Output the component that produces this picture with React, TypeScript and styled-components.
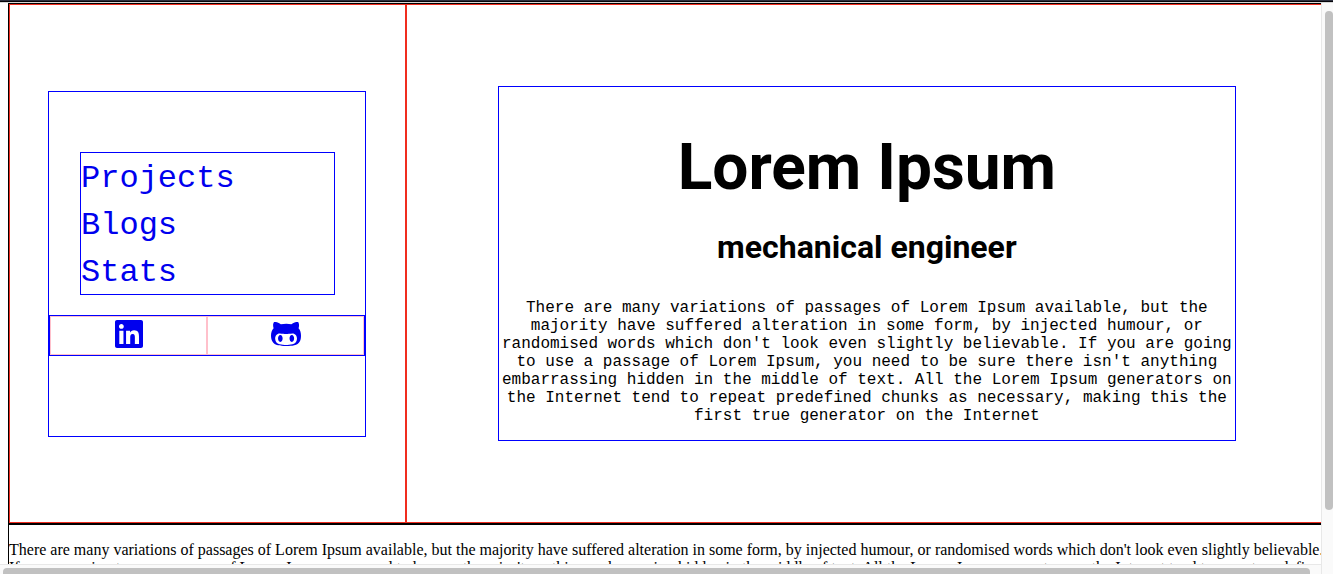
import React from 'react';
import styled, { createGlobalStyle } from 'styled-components';
import { FaLinkedin, FaGithubAlt } from 'react-icons/fa';

const GlobalStyle = createGlobalStyle`
  *, *::before, *::after { box-sizing: border-box; }
  body {
    margin: 0;
    background: #fff;
    color: #000;
    font: 16px/18px "Liberation Serif", "Times New Roman", serif;
    overflow: hidden;
  }
`;

const Frame = styled.div`
  display: grid;
  grid-template-columns: minmax(0, 1fr) 12px;
  grid-template-rows: 3px minmax(0, 1fr) 10px;
  height: 100vh;
`;

const WindowEdge = styled.div`
  grid-column: 1 / -1;
  background: #2d303f;
  border-bottom: 1px solid #d8d8d8;
  box-shadow: inset 0 -1px 0 #05050a;
`;

const Viewport = styled.div`
  overflow: hidden;
`;

const VerticalTrack = styled.div`
  grid-row: 2 / -1;
  grid-column: 2;
  padding: 8px 0 64px 3px;
  background: #fafafa;
  border-left: 1px solid #e8e8e8;
`;

const HorizontalTrack = styled.div`
  padding: 3px 11px 0 3px;
  background: #fafafa;
  border-top: 1px solid #e8e8e8;
`;

const Thumb = styled.div<{ $horizontal?: boolean }>`
  height: 100%;
  background: #c1c1c1;
  border-radius: ${(p) => (p.$horizontal ? '4px 4px 0 0' : '4px')};
`;

const Section = styled.section`
  width: 100%;
  margin-left: 8px;
  border: 1px solid #000;
`;

const Hero = styled(Section)`
  display: flex;
  min-height: 521px;
`;

const Column = styled.div<{ $width?: string }>`
  display: flex;
  align-items: center;
  justify-content: center;
  flex: ${(p) => (p.$width ? `0 0 ${p.$width}` : '1 1 0')};
  min-width: 0;
  border: 1px solid #f02d1f;
`;

const Panel = styled.div`
  box-sizing: content-box;
  width: 80%;
  border: 1px solid #00f;
`;

const Sidebar = styled(Panel)`
  display: flex;
  flex-direction: column;
  gap: 20px;
  min-height: 284px;
  padding-top: 60px;
`;

const Nav = styled.nav`
  box-sizing: content-box;
  display: flex;
  flex-direction: column;
  width: 80%;
  margin: 0 auto;
  border: 1px solid #00f;
`;

const NavLink = styled.a`
  color: #00e;
  font: 32px/47px "Liberation Mono", "Courier New", monospace;
  text-decoration: none;
  padding-top: 2px;
  height: 47px;
`;

const SocialRow = styled.div`
  display: flex;
  border: 1px solid #00f;
`;

const SocialLink = styled.a`
  display: flex;
  flex: 1;
  justify-content: center;
  padding: 1px 0 4px;
  border: 1px solid #ffc0cb;
  color: #00e;
  font-size: 32px;

  svg { height: 32px; width: auto; }
`;

const Intro = styled(Panel)`
  text-align: center;
`;

const Name = styled.h1`
  margin: 43px 0 23px;
  font: 700 64px/75px Roboto, sans-serif;
`;

const Role = styled.h2`
  margin: 0;
  font: 700 32px/38px Roboto, sans-serif;
`;

const Summary = styled.p`
  margin: 33px 0 15px;
  font: 16px/18px "Liberation Mono", "Courier New", monospace;
`;

const BodyText = styled.p`
  margin: 16px -4px 16px 0;
`;

const passage =
  "There are many variations of passages of Lorem Ipsum available, but the majority have suffered alteration in some form, by injected humour, or randomised words which don't look even slightly believable. If you are going to use a passage of Lorem Ipsum, you need to be sure there isn't anything embarrassing hidden in the middle of text. All the Lorem Ipsum generators on the Internet tend to repeat predefined chunks as necessary, making this the first true generator on the Internet";

export default function App() {
  return (
    <>
      <GlobalStyle />
      <Frame>
        <WindowEdge />
        <Viewport>
          <Hero>
            <Column $width="calc(30% + 1px)">
              <Sidebar>
                <Nav>
                  <NavLink href="#projects">Projects</NavLink>
                  <NavLink href="#blogs">Blogs</NavLink>
                  <NavLink href="#stats">Stats</NavLink>
                </Nav>
                <SocialRow>
                  <SocialLink href="#linkedin" aria-label="LinkedIn">
                    <FaLinkedin />
                  </SocialLink>
                  <SocialLink href="#github" aria-label="GitHub">
                    <FaGithubAlt />
                  </SocialLink>
                </SocialRow>
              </Sidebar>
            </Column>
            <Column>
              <Intro>
                <Name>Lorem Ipsum</Name>
                <Role>mechanical engineer</Role>
                <Summary>{passage}</Summary>
              </Intro>
            </Column>
          </Hero>
          <Section>
            <BodyText>{passage}</BodyText>
          </Section>
        </Viewport>
        <VerticalTrack>
          <Thumb />
        </VerticalTrack>
        <HorizontalTrack>
          <Thumb $horizontal />
        </HorizontalTrack>
      </Frame>
    </>
  );
}
